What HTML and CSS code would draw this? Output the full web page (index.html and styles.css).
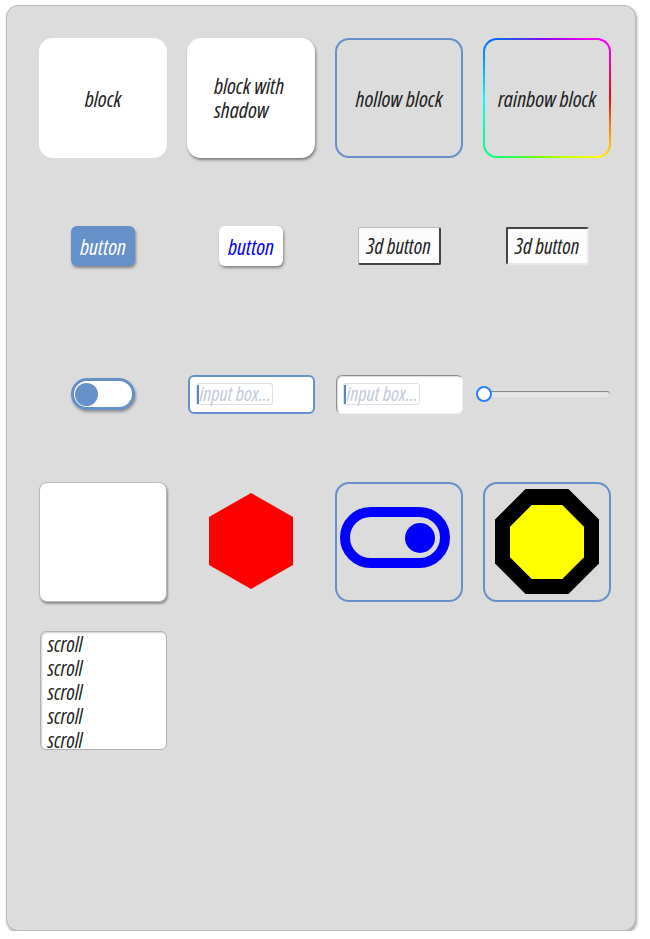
FILE: index.html
```html
<!DOCTYPE html>
<html>
<head>
<meta charset="utf-8">
<link rel="stylesheet" href="styles.css">
</head>
<body>
<div class="panel">
  <div class="grid">
    <div class="cell"><div class="block">block</div></div>
    <div class="cell"><div class="block shadowed"><span class="lefttext">block with<br>shadow</span></div></div>
    <div class="cell"><div class="block hollow">hollow block</div></div>
    <div class="cell"><div class="block rainbow">rainbow block</div></div>

    <div class="cell"><div class="btn btn-blue">button</div></div>
    <div class="cell"><div class="btn btn-white">button</div></div>
    <div class="cell"><div class="btn3d raised">3d button</div></div>
    <div class="cell"><div class="btn3d sunken">3d button</div></div>

    <div class="cell"><div class="toggle"><div class="knob"></div></div></div>
    <div class="cell"><div class="input input-blue"><div class="field"><span class="caret"></span>input box...</div></div></div>
    <div class="cell"><div class="input input-inset"><div class="field"><span class="caret"></span>input box...</div></div></div>
    <div class="cell"><div class="slider"><div class="track"></div><div class="thumb"></div></div></div>

    <div class="cell"><div class="whitebox"></div></div>
    <div class="cell">
      <svg class="hex" width="84" height="96" viewBox="0 0 84 96"><polygon points="42,0 84,24 84,72 42,96 0,72 0,24" fill="#ff0000"/></svg>
    </div>
    <div class="cell"><div class="iconbox">
      <svg width="124" height="116" viewBox="0 0 124 116">
        <rect x="8" y="28" width="100" height="51" rx="25.5" ry="25.5" fill="none" stroke="#0000ff" stroke-width="10"/>
        <circle cx="83" cy="54" r="15" fill="#0000ff"/>
      </svg>
    </div></div>
    <div class="cell"><div class="iconbox">
      <svg width="124" height="116" viewBox="0 0 124 116">
        <polygon points="40.5,5 83.5,5 114,35.5 114,79.5 83.5,110 40.5,110 10,79.5 10,35.5" fill="#000"/>
        <polygon points="46.7,21 77.3,21 99,42.7 99,73.3 77.3,95 46.7,95 25,73.3 25,42.7" fill="#ffff00"/>
      </svg>
    </div></div>

    <div class="cell"><div class="scrollbox">
      <div>scroll</div><div>scroll</div><div>scroll</div><div>scroll</div><div>scroll</div>
    </div></div>
  </div>
</div>
</body>
</html>
```

FILE: styles.css
```css
html, body {
  margin: 0;
  padding: 0;
  background: #ffffff;
}
body {
  padding: 5px 0 0 6px;
  font-family: "Open Sans", "DejaVu Sans", sans-serif;
  font-stretch: 78%;
  font-style: italic;
  color: #222;
}
.panel {
  box-sizing: border-box;
  width: 630px;
  height: 926px;
  background: #dcdcdc;
  border-radius: 12px;
  border: 1px solid #b8b8b8;
  box-shadow: 1px 2px 3px rgba(0,0,0,0.35);
  padding: 32px 0 0 32px;
}
.grid {
  display: grid;
  grid-template-columns: repeat(4, 128px);
  grid-auto-rows: 120px;
  column-gap: 20px;
  row-gap: 28px;
}
.cell {
  display: flex;
  align-items: center;
  justify-content: center;
}
.block {
  box-sizing: border-box;
  width: 128px;
  height: 120px;
  border-radius: 14px;
  background: #fff;
  display: flex;
  align-items: center;
  justify-content: center;
  font-size: 22px;
  line-height: 23px;
  text-align: center;
  white-space: nowrap;
}
.shadowed {
  box-shadow: 1px 2px 3px rgba(0,0,0,0.45);
}
.lefttext {
  text-align: left;
  display: inline-block;
  margin-top: -2px;
  margin-right: 4px;
  line-height: 24px;
}
.hollow {
  background: transparent;
  border: 2px solid #6690c8;
}
.rainbow {
  border: 2px solid transparent;
  background:
    linear-gradient(#dcdcdc, #dcdcdc) padding-box,
    conic-gradient(from 0deg, #9000ff, #ff00ff 45deg, #ff0000 90deg, #ffff00 140deg, #80ff00 185deg, #00ff80 225deg, #00ffff 270deg, #0070ff 315deg, #9000ff 360deg) border-box;
}
.btn {
  box-sizing: border-box;
  width: 64px;
  height: 40px;
  border-radius: 6px;
  display: flex;
  align-items: center;
  justify-content: center;
  font-size: 22px;
  white-space: nowrap;
  box-shadow: 1px 2px 3px rgba(0,0,0,0.4);
}
.btn-blue {
  background: #6690c8;
  color: #fff;
}
.btn-white {
  background: #fff;
  color: #0000ff;
}
.btn3d {
  box-sizing: border-box;
  width: 83px;
  height: 38px;
  background: #fcfcfc;
  display: flex;
  align-items: center;
  justify-content: center;
  font-size: 21px;
  white-space: nowrap;
  color: #222;
}
.raised {
  border-top: 1px solid #b8b8b8;
  border-left: 1px solid #b8b8b8;
  border-right: 2px solid #444;
  border-bottom: 2px solid #444;
  border-radius: 2px;
}
.sunken {
  border-top: 2px solid #444;
  border-left: 2px solid #444;
  border-right: 2px solid #e8e8e8;
  border-bottom: 2px solid #e8e8e8;
  border-radius: 2px;
}
.toggle {
  box-sizing: border-box;
  width: 64px;
  height: 32px;
  border: 3px solid #6690c8;
  border-radius: 16px;
  background: #fff;
  box-shadow: 1px 2px 3px rgba(0,0,0,0.35);
  display: flex;
  align-items: center;
  padding-left: 1px;
}
.knob {
  width: 23px;
  height: 23px;
  border-radius: 50%;
  background: #6690c8;
}
.input {
  box-sizing: border-box;
  width: 127px;
  height: 39px;
  border-radius: 6px;
  background: #fff;
  display: flex;
  align-items: center;
  padding-left: 6px;
}
.input-blue {
  border: 2px solid #6690c8;
}
.input-inset {
  border-top: 1px solid #909090;
  border-left: 1px solid #909090;
  border-right: 1px solid #f0f0f0;
  border-bottom: 1px solid #f0f0f0;
  box-shadow: inset 1px 1px 1px rgba(0,0,0,0.15);
}
.field {
  box-sizing: border-box;
  height: 22px;
  border: 1px solid #dde0e6;
  border-radius: 3px;
  padding-right: 1px;
  font-size: 20px;
  line-height: 20px;
  color: #c3cad8;
  display: flex;
  align-items: center;
  white-space: nowrap;
}
.caret {
  display: inline-block;
  width: 2px;
  height: 19px;
  background: #5b86c4;
  margin-right: 1px;
  flex: none;
}
.slider {
  position: relative;
  width: 128px;
  height: 20px;
  display: flex;
  align-items: center;
}
.track {
  margin-left: 1px;
  width: 126px;
  height: 6px;
  border-radius: 3px;
  background: #e6e6e6;
  box-shadow: inset 0 1px 1px rgba(0,0,0,0.45);
}
.thumb {
  position: absolute;
  left: -7px;
  top: 2px;
  box-sizing: border-box;
  width: 16px;
  height: 16px;
  border-radius: 50%;
  background: #fff;
  border: 2px solid #2a7fff;
}
.whitebox {
  box-sizing: border-box;
  width: 128px;
  height: 120px;
  background: #fff;
  border: 1px solid #b8b8b8;
  border-radius: 8px;
  box-shadow: 1px 2px 2px rgba(0,0,0,0.35);
}
.hex {
  display: block;
  margin-top: -2px;
}
.iconbox {
  box-sizing: border-box;
  width: 128px;
  height: 120px;
  border: 2px solid #6690c8;
  border-radius: 14px;
}
.iconbox svg {
  display: block;
}
.scrollbox {
  box-sizing: border-box;
  width: 127px;
  height: 119px;
  background: #fff;
  border: 1px solid #b0b0b0;
  border-radius: 6px;
  box-shadow: inset 1px 1px 2px rgba(0,0,0,0.2);
  overflow: hidden;
  padding-left: 7px;
  font-size: 21px;
  line-height: 24px;
  align-self: center;
}
```
